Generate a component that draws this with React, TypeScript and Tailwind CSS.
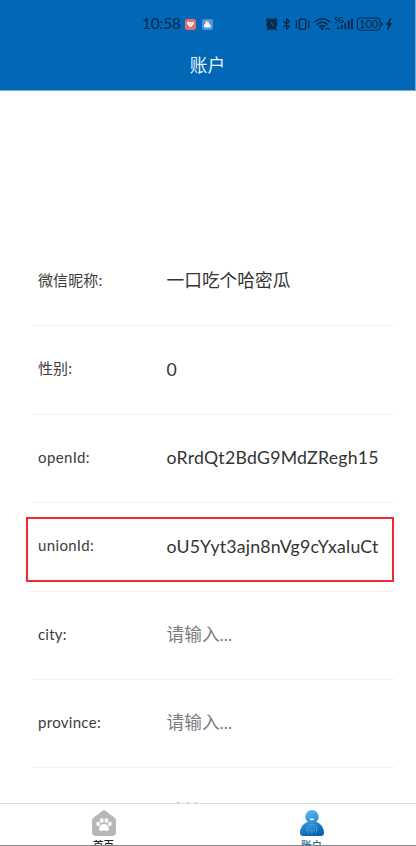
import React from "react";

type Field = {
  label: string;
  value?: string;
  labelClass?: string;
  valueClass?: string;
  marked?: boolean;
};

const fields: Field[] = [
  { label: "微信昵称:", value: "一口吃个哈密瓜", labelClass: "tracking-[0.1px]" },
  { label: "性别:", value: "0", labelClass: "tracking-[0.1px]" },
  { label: "openId:", value: "oRrdQt2BdG9MdZRegh15", labelClass: "tracking-[0.4px]", valueClass: "tracking-[0.24px]" },
  { label: "unionId:", value: "oU5Yyt3ajn8nVg9cYxaluCt", labelClass: "tracking-[0.35px]", valueClass: "tracking-[0.22px]", marked: true },
  { label: "city:", labelClass: "tracking-[0.2px]" },
  { label: "province:", labelClass: "tracking-[0.3px]" },
  { label: "" },
];

function StatusIcons() {
  return (
    <svg width="128" height="18" viewBox="265 15 128 18" fill="none" stroke="#07294a" strokeWidth="1.2" strokeLinecap="round" strokeLinejoin="round">
      <circle cx="271.8" cy="24.3" r="4.9" fill="#07294a" />
      <path d="M266.5 20.5l2-2M277 20.5l-2-2M268.5 28.6l-1 1.2M275 28.6l1 1.2" strokeWidth="1.6" />
      <path d="M271.8 21.7v2.8l2 1.2" stroke="#0068b7" strokeWidth="1" />
      <path d="M283.8 21.2l5.6 5.2-2.8 3V18.6l2.8 2.9-5.6 5.4" />
      <rect x="299.2" y="19.2" width="6.5" height="10" rx="1" strokeWidth="1.4" />
      <path d="M296.3 20.5v7.5M308.7 20.5v7.5" />
      <path d="M315 21.6q7.3-5.6 14.6 0M317.5 24.2q4.8-3.8 9.6 0M319.8 26.6q2.5-2 5 0" strokeWidth="1.5" />
      <circle cx="322.2" cy="28.6" r="1" fill="#07294a" />
      <path d="M326.2 28.8h1M328.4 28.8h.7" strokeWidth="1.4" />
      <text x="334.3" y="23" fontSize="7.2" fontWeight="700" fontFamily="Lato, sans-serif" fill="#07294a" stroke="none">5G</text>
      <path d="M338.2 26.6v2.7M341.8 25v4.3M345.3 23.2v6.1M348.8 20.5v8.8M352 18.2v11.1" strokeWidth="1.9" strokeLinecap="butt" />
      <rect x="357.3" y="18" width="22.7" height="12.2" rx="3.4" strokeWidth="1.1" />
      <path d="M382 23v2.2" strokeWidth="1.5" />
      <text x="359.2" y="28.2" fontSize="11" textLength="19" fontFamily="Lato, sans-serif" fill="#07294a" stroke="none">100</text>
      <path d="M390.6 18.5l-4 6h2.2l-1.3 5.3 4-6.3h-2.3z" fill="#07294a" strokeWidth=".9" />
    </svg>
  );
}

function PawHome() {
  return (
    <svg width="24" height="26" viewBox="0 0 24 26">
      <path d="M10.5.7q1.5-1 3 0l8.8 6.7Q24 8.8 24 11v11q0 4-4 4H4q-4 0-4-4V11q0-2.2 1.7-3.6z" fill="#b7b7bb" />
      <g fill="#fff">
        <ellipse cx="6.3" cy="14" rx="1.9" ry="2.3" transform="rotate(-20 6.3 14)" />
        <ellipse cx="9.8" cy="10.5" rx="1.9" ry="2.5" />
        <ellipse cx="14.4" cy="10.5" rx="1.9" ry="2.5" />
        <ellipse cx="17.8" cy="14" rx="1.9" ry="2.3" transform="rotate(20 17.8 14)" />
        <path d="M12 13.8c2.4 0 5 3.3 5 5.3 0 2.5-2.8 2-5 1.5-2.2.5-5 1-5-1.5 0-2 2.6-5.3 5-5.3z" />
      </g>
    </svg>
  );
}

function Person() {
  return (
    <svg width="24" height="26" viewBox="0 0 24 26">
      <defs>
        <linearGradient id="person" x1="0" y1="0" x2="0.3" y2="1">
          <stop stopColor="#66c2f6" />
          <stop offset="1" stopColor="#0566b8" />
        </linearGradient>
      </defs>
      <path d="M12 0a6.7 6.7 0 0 1 4.2 11.8C21 13.5 24 18 24 23q0 3-3 3H3q-3 0-3-3c0-5 3-9.5 7.8-11.2A6.7 6.7 0 0 1 12 0z" fill="url(#person)" />
      <path d="M9.5 8.5h5q-.4 1.9-2.5 1.9t-2.5-1.9z" fill="#e5f5ff" />
      <path d="M8.7 23a5 5 0 1 1 6.6 0M10.2 21.5a2.7 2.7 0 1 1 3.6 0M12 19v5" fill="none" stroke="#67b2e3" strokeWidth=".8" />
    </svg>
  );
}

function Row({ field }: { field: Field }) {
  return (
    <div className="relative ml-[32px] mr-[22px] flex h-[88.4px] shrink-0 items-center border-b border-[#f0f0f0] pl-[6px]">
      <span className={`w-[128.5px] pb-[3px] text-[15px] text-[#3c3c3c] ${field.labelClass ?? ""}`}>{field.label}</span>
      <span className={`whitespace-nowrap text-[17.7px] ${field.value ? "text-[#333]" : "text-[#7c7c7c]"} ${field.valueClass ?? ""}`}>
        {field.value ?? "请输入..."}
      </span>
      {field.marked && <div className="absolute -left-[6px] right-0 top-[14px] h-[65px] border-2 border-[#ef2932]" />}
    </div>
  );
}

export default function App() {
  return (
    <div className="flex h-[846px] w-[416px] flex-col overflow-hidden bg-white font-[Lato,'Noto_Sans_CJK_SC',sans-serif]">
      <header className="flex h-[91px] shrink-0 flex-col border-b border-r border-b-[#74acd7] border-r-[#74acd7] bg-[#0068b7]">
        <div className="flex h-[48px] items-center pl-[142px]">
          <span className="w-[43px] text-[15.5px] leading-none tracking-[-0.2px] text-[#07294a]">10:58</span>
          <div className="flex w-[80px] items-center gap-[6px]">
            <svg width="11" height="11" viewBox="0 0 11 11">
              <rect width="11" height="11" rx="2.5" fill="#e46d70" />
              <path d="M5.5 8.5L2 4.8q0-2.5 2-2l1.5 1 1.5-1q2-.5 2 2z" fill="#fff" />
              <path d="M4.2 4.5l1.3 1.2 1.3-1.2" fill="none" stroke="#e46d70" strokeWidth=".7" />
            </svg>
            <svg width="11" height="11" viewBox="0 0 11 11">
              <rect width="11" height="11" rx="2.5" fill="#5594dc" />
              <circle cx="5" cy="4" r="2" fill="#ffdc80" />
              <path d="M3.3 8.5a1.8 1.8 0 0 1 0-3.5 2.5 2.5 0 0 1 4.5.5 1.6 1.6 0 0 1 0 3z" fill="#fff" />
            </svg>
          </div>
          <StatusIcons />
        </div>
        <h1 className="flex h-[37px] items-center justify-center text-[17.7px] text-[#e8f3fb]">账户</h1>
      </header>

      <main className="flex min-h-0 flex-1 flex-col overflow-hidden pt-[147px]">
        {fields.map((field, i) => (
          <Row key={i} field={field} />
        ))}
      </main>

      <nav className="flex h-[43px] shrink-0 overflow-hidden border-b border-t border-b-[#858585] border-t-[#dedede] bg-white">
        <div className="flex h-[54px] w-[207px] flex-col items-center pt-[6px]">
          <PawHome />
          <span className="mt-[3px] text-[10.5px] font-medium leading-[13px] text-[#222]">首页</span>
        </div>
        <div className="flex h-[54px] w-[209px] flex-col items-center pt-[6px]">
          <Person />
          <span className="mt-[3px] text-[10.5px] font-medium leading-[13px] text-[#15699f]">账户</span>
        </div>
      </nav>
    </div>
  );
}
